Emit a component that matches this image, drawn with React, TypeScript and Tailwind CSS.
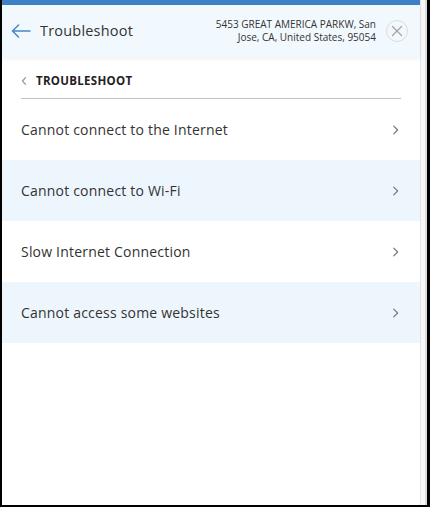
import React from 'react';

const items = [
  'Cannot connect to the Internet',
  'Cannot connect to Wi-Fi',
  'Slow Internet Connection',
  'Cannot access some websites',
];

const ChevronRight = ({ className }: { className?: string }) => (
  <svg viewBox="0 0 10 16" className={className} fill="none" stroke="currentColor" strokeWidth={1.7} strokeLinecap="round" strokeLinejoin="round">
    <path d="M2.5 2.5 L8 8 L2.5 13.5" />
  </svg>
);

const App: React.FC = () => {
  return (
    <div className="w-[430px] h-[507px] bg-black pl-[2px] pr-[3px] pb-[2px] flex" style={{ fontFamily: '"Open Sans", "Liberation Sans", sans-serif' }}>
      <div className="flex-1 flex bg-white overflow-hidden">
        <div className="flex-1 flex flex-col">
          <div className="h-[5px] bg-[#3d80c6]" />
          <div className="h-[52px] bg-[#f2f9fe] flex items-center pl-[9px] pr-[12px] shadow-[0_2px_4px_rgba(0,0,0,0.06)] relative z-10">
            <svg viewBox="0 0 20 14" className="w-[20px] h-[14px] text-[#4a86c4]" fill="none" stroke="currentColor" strokeWidth={1.5} strokeLinecap="round" strokeLinejoin="round">
              <path d="M19 7 H1.5 M7.5 1 L1.5 7 L7.5 13" />
            </svg>
            <span className="ml-[9px] text-[14.5px] text-[#333] tracking-[0.2px]">Troubleshoot</span>
            <div className="ml-auto text-right text-[10px] leading-[13px] text-[#333]">
              <div>5453 GREAT AMERICA PARKW, San</div>
              <div>Jose, CA, United States, 95054</div>
            </div>
            <div className="ml-[10px] w-[22px] h-[22px] rounded-full border border-[#d9dde2] bg-[#f5f8fb] flex items-center justify-center">
              <svg viewBox="0 0 12 12" className="w-[12px] h-[12px] text-[#a0a5aa]" fill="none" stroke="currentColor" strokeWidth={1.3} strokeLinecap="round">
                <path d="M1.5 1.5 L10.5 10.5 M10.5 1.5 L1.5 10.5" />
              </svg>
            </div>
          </div>
          <div className="px-[19px] pt-[18px]">
            <div className="flex items-center h-[12px]">
              <svg viewBox="0 0 8 12" className="w-[6px] h-[10px] text-[#999]" fill="none" stroke="currentColor" strokeWidth={1.6} strokeLinecap="round" strokeLinejoin="round">
                <path d="M6 1.5 L2 6 L6 10.5" />
              </svg>
              <span className="ml-[9px] text-[11.5px] font-bold text-[#222] tracking-[0.3px]">TROUBLESHOOT</span>
            </div>
            <div className="mt-[11px] h-px bg-[#c2c2c2]" />
          </div>
          <div className="flex flex-col">
            {items.map((label, i) => (
              <div key={label} className={`h-[61px] flex items-center pl-[19px] pr-[21px] ${i % 2 === 1 ? 'bg-[#eef6fd]' : 'bg-white'}`}>
                <span className="text-[14px] text-[#333] tracking-[0.2px]">{label}</span>
                <ChevronRight className="ml-auto w-[7px] h-[12px] text-[#777]" />
              </div>
            ))}
          </div>
        </div>
        <div className="w-[7px] bg-[#f7f7f7] border-l border-[#e4e4e4] flex">
          <div className="ml-auto w-[2px] bg-[#dcdcdc]" />
        </div>
      </div>
    </div>
  );
};

export default App;
